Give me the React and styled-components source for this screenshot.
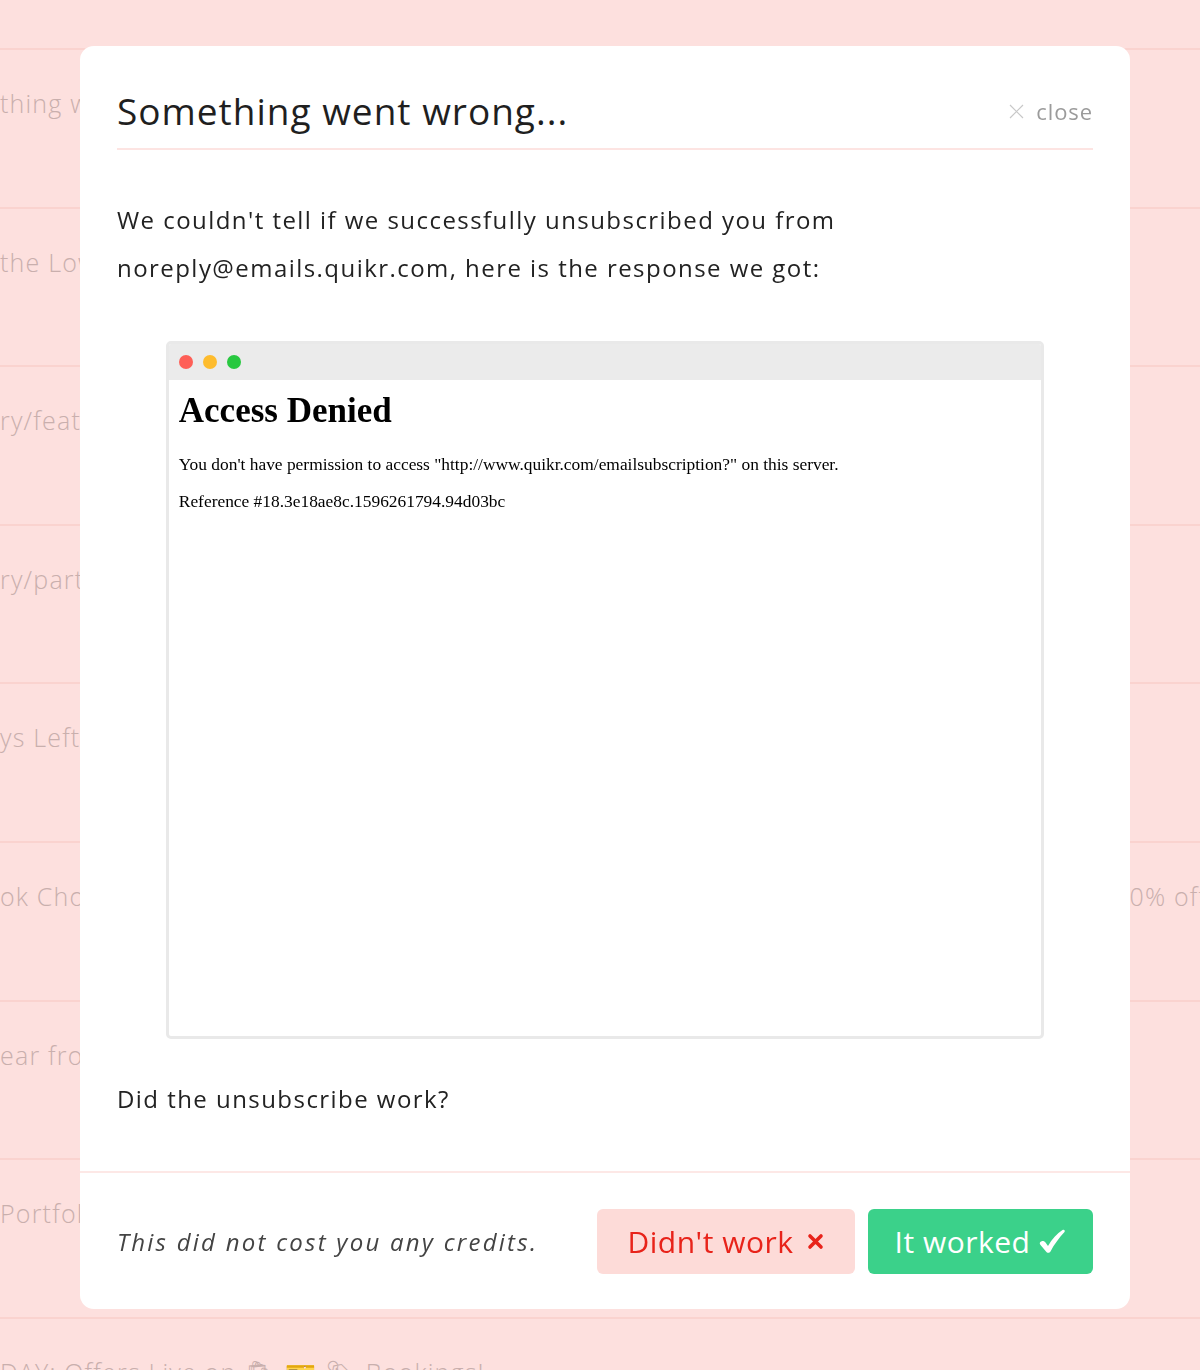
import React from "react";
import styled, { createGlobalStyle } from "styled-components";

const GlobalStyle = createGlobalStyle`
  html, body {
    margin: 0;
    padding: 0;
    background: #fde0de;
    overflow: hidden;
  }
  body {
    font-family: "Open Sans", "Liberation Sans", sans-serif;
    color: #222;
  }
`;

/////////////////////////////////////////////////////////// BACKGROUND LIST

const List = styled.div`
  display: flex;
  flex-direction: column;
  height: 1370px;
  overflow: hidden;
`;

const Row = styled.div`
  display: grid;
  grid-template-columns: 1fr 86px;
  align-items: start;
  height: ${(p) => p.$height || 158.6}px;
  padding-top: ${(p) => (p.$top === undefined ? 36 : p.$top)}px;
  box-sizing: border-box;
  border-bottom: 2px solid #fad3cf;
  flex-shrink: 0;
  font-size: 25px;
  font-weight: 300;
  letter-spacing: 1.2px;
  color: #c9afad;
  white-space: nowrap;
`;

const RowText = styled.span`
  overflow: visible;
`;

/////////////////////////////////////////////////////////// MODAL

const Overlay = styled.div`
  position: fixed;
  inset: 0;
  padding: 46px 70px 0 80px;
  box-sizing: border-box;
`;

const Modal = styled.div`
  background: #fff;
  border-radius: 14px;
  display: flex;
  flex-direction: column;
`;

const Header = styled.div`
  display: flex;
  align-items: center;
  justify-content: space-between;
  margin: 0 37px;
  padding: 42px 0 14px;
  border-bottom: 2px solid #fde4e2;
`;

const Title = styled.h2`
  margin: 0;
  font-size: 37px;
  font-weight: 400;
  line-height: 46px;
  color: #1f1f1f;
  letter-spacing: 1px;
`;

const CloseButton = styled.button`
  display: flex;
  align-items: center;
  gap: 12px;
  border: none;
  background: none;
  padding: 0;
  font-family: inherit;
  font-size: 22px;
  letter-spacing: 0.9px;
  color: #9b9b9b;
  cursor: pointer;
`;

const Body = styled.div`
  padding: 46px 37px 48px;
`;

const Text = styled.p`
  margin: 0;
  font-size: 24px;
  line-height: 48px;
  letter-spacing: 1.45px;
  color: #222;
`;

const Frame = styled.div`
  width: 90%;
  height: 698px;
  margin: 49px auto 36px;
  border: 3px solid #e9e9e9;
  border-radius: 5px;
  box-sizing: border-box;
  display: flex;
  flex-direction: column;
  overflow: hidden;
`;

const FrameBar = styled.div`
  display: flex;
  align-items: center;
  gap: 10px;
  height: 36px;
  padding: 0 10px;
  background: #ebebeb;
  flex-shrink: 0;
`;

const Dot = styled.span`
  width: 14px;
  height: 14px;
  border-radius: 50%;
  background: ${(p) => p.$color};
`;

const FrameContent = styled.div`
  padding: 12px 10px;
  font-family: "Liberation Serif", "Times New Roman", serif;
  color: #000;

  h1 {
    margin: 0 0 24px;
    font-size: 35px;
    line-height: 38px;
  }

  p {
    margin: 0 0 17px;
    font-size: 17.4px;
    line-height: 20px;
  }
`;

const Footer = styled.div`
  display: flex;
  align-items: center;
  justify-content: space-between;
  padding: 36px 37px 35px;
  border-top: 2px solid #fde8e6;
`;

const Note = styled.span`
  font-size: 24px;
  font-style: italic;
  letter-spacing: 2.25px;
  color: #444;
`;

const Actions = styled.div`
  display: flex;
  gap: 13px;
`;

const ActionButton = styled.button`
  display: flex;
  align-items: center;
  justify-content: center;
  gap: ${(p) => (p.$variant === "success" ? 9 : 14)}px;
  height: 65px;
  width: ${(p) => p.$width}px;
  border: none;
  border-radius: 6px;
  font-family: inherit;
  font-size: 30px;
  letter-spacing: 0.5px;
  cursor: pointer;
  background: ${(p) => (p.$variant === "success" ? "#3bd18a" : "#fddbd8")};
  color: ${(p) => (p.$variant === "success" ? "#fff" : "#e8231a")};
`;

const CrossIcon = () => (
  <svg width="17" height="17" viewBox="0 0 17 17">
    <path
      d="M3 3 L14 14 M14 3 L3 14"
      stroke="#e8231a"
      strokeWidth="3.6"
      strokeLinecap="round"
      fill="none"
    />
  </svg>
);

const CheckIcon = () => (
  <svg width="27" height="25" viewBox="0 0 27 25">
    <path
      d="M1 13.5 C2.5 11.5 5 11.5 6.5 13.5 L9 17 C13 10 18 4.5 23.5 1 C25 0 26.5 1.5 25.5 3 C20 9 15 15.5 11.5 22.5 C10.5 24.3 8 24.3 7 22.5 L1.5 16 C0.8 15.2 0.6 14.2 1 13.5 Z"
      fill="#fff"
    />
  </svg>
);

///////////////////////////////////////////////////////////

const rows = [
  { text: "", right: "", height: 50, top: 0 },
  { text: "thing went wrong with your order", right: "" },
  { text: "the Lowest Prices of the year", right: "" },
  { text: "ry/featured deals for you this week", right: "" },
  { text: "ry/partner offers inside", right: "" },
  { text: "ys Left to grab your rewards", right: "" },
  { text: "ok Choices for the weekend", right: "20% off" },
  { text: "ear from you soon", right: "" },
  { text: "Portfolio update for this month", right: "" },
  { text: "DAY: Offers Live on 🛍 🎫 🏷 Bookings!", right: "" },
];

const App = () => {
  return (
    <>
      <GlobalStyle />
      <List>
        {rows.map((r, i) => (
          <Row key={i} $height={r.height} $top={r.top}>
            <RowText>{r.text}</RowText>
            <RowText>{r.right}</RowText>
          </Row>
        ))}
      </List>

      <Overlay>
        <Modal>
          <Header>
            <Title>Something went wrong...</Title>
            <CloseButton>
              <svg width="15" height="15" viewBox="0 0 15 15">
                <path
                  d="M1 1 L14 14 M14 1 L1 14"
                  stroke="#c8c8c8"
                  strokeWidth="1.2"
                  fill="none"
                />
              </svg>
              close
            </CloseButton>
          </Header>

          <Body>
            <Text>
              We couldn't tell if we successfully unsubscribed you from
              <br />
              noreply@emails.quikr.com, here is the response we got:
            </Text>

            <Frame>
              <FrameBar>
                <Dot $color="#fe5f57" />
                <Dot $color="#febc2e" />
                <Dot $color="#28c840" />
              </FrameBar>
              <FrameContent>
                <h1>Access Denied</h1>
                <p>
                  You don't have permission to access
                  "http://www.quikr.com/emailsubscription?" on this server.
                </p>
                <p>Reference #18.3e18ae8c.1596261794.94d03bc</p>
              </FrameContent>
            </Frame>

            <Text>Did the unsubscribe work?</Text>
          </Body>

          <Footer>
            <Note>This did not cost you any credits.</Note>
            <Actions>
              <ActionButton $width={258}>
                Didn't work <CrossIcon />
              </ActionButton>
              <ActionButton $variant="success" $width={225}>
                It worked <CheckIcon />
              </ActionButton>
            </Actions>
          </Footer>
        </Modal>
      </Overlay>
    </>
  );
};

export default App;
